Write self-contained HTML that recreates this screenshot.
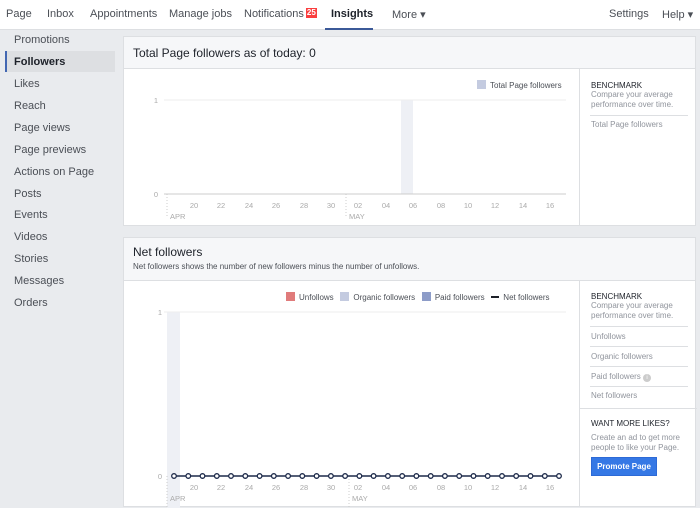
<!DOCTYPE html>
<html><head><meta charset="utf-8"><style>
*{margin:0;padding:0;box-sizing:border-box}
body{width:700px;height:501px;overflow:hidden;background:#e9ebee;font-family:"Liberation Sans",Arial,sans-serif;position:relative;color:#1d2129}
.nav{position:absolute;left:0;top:0;width:700px;height:30px;background:#fff;border-bottom:1px solid #dddfe2}
.nav span{position:absolute;top:8px;font-size:11px;color:#4b4f56;white-space:nowrap}
.nav span.badge{position:static;display:inline-block;background:#fa3e3e;color:#fff;font-size:8px;font-weight:bold;padding:0 1px;vertical-align:top;line-height:10px;margin-left:2px}
.side div{position:absolute;left:14px;font-size:11px;color:#4b4f56}
.card{position:absolute;left:123px;width:573px;background:#fff;border:1px solid #dddfe2}
.hd{background:#f6f7f9;border-bottom:1px solid #dddfe2}
.rp{position:absolute;left:455px;bottom:0;border-left:1px solid #dddfe2;width:117px}
.rp .t{font-size:8px;color:#1d2129;position:absolute;left:11px;white-space:nowrap}
.rp .d{font-size:8px;color:#90949c;position:absolute;left:11px;line-height:10px;white-space:nowrap}
.rp .l{position:absolute;left:10px;width:98px;border-top:1px solid #dddfe2}
svg text{font-family:"Liberation Sans",Arial,sans-serif;font-size:7.5px;fill:#aaa}
.lg{position:absolute;font-size:8px;color:#4b4f56;white-space:nowrap}
.sq{display:inline-block;width:9px;height:9px;vertical-align:-1px;margin-right:4px}
</style></head><body>
<div class="nav">
<span style="left:6px">Page</span><span style="left:47px">Inbox</span><span style="left:90px">Appointments</span><span style="left:169px">Manage jobs</span><span style="left:244px">Notifications<span class="badge">25</span></span>
<span style="left:331px;color:#1d2129;font-weight:bold">Insights</span><span style="left:392px">More ▾</span>
<span style="left:609px">Settings</span><span style="left:662px">Help ▾</span>
<div style="position:absolute;left:325px;top:28px;width:48px;height:2px;background:#3b5998"></div>
</div>
<div class="side">
<div style="top:34px">Promotions</div>
<div style="left:5px;top:51px;width:110px;height:21px;background:#dddfe2;border-left:2px solid #4267b2"></div>
<div style="top:56px;color:#1d2129;font-weight:bold">Followers</div>
<div style="top:78px">Likes</div><div style="top:100px">Reach</div><div style="top:122px">Page views</div>
<div style="top:144px">Page previews</div><div style="top:166px">Actions on Page</div><div style="top:188px">Posts</div>
<div style="top:209px">Events</div><div style="top:231px">Videos</div><div style="top:253px">Stories</div>
<div style="top:275px">Messages</div><div style="top:297px">Orders</div>
</div>

<div class="card" style="top:36px;height:190px">
<div class="hd" style="height:32px;padding:9px 9px;font-size:12px">Total Page followers as of today: 0</div>
<div class="lg" style="left:353px;top:43px"><span class="sq" style="background:#c4cbe0"></span>Total Page followers</div>
<svg style="position:absolute;left:0;top:0" width="455" height="190">
<rect x="277" y="63" width="12" height="94" fill="#eef0f5"/>
<line x1="40" y1="63" x2="442" y2="63" stroke="#eee"/>
<text x="34" y="66" text-anchor="end">1</text><text x="34" y="160" text-anchor="end">0</text>
<line x1="40" y1="157" x2="442" y2="157" stroke="#ccc"/>
<line x1="43" y1="157" x2="43" y2="179" stroke="#ccc" stroke-dasharray="1,2"/>
<line x1="222" y1="157" x2="222" y2="179" stroke="#ccc" stroke-dasharray="1,2"/>
<g text-anchor="middle">
<text x="70" y="171">20</text><text x="97" y="171">22</text><text x="125" y="171">24</text><text x="152" y="171">26</text><text x="180" y="171">28</text><text x="207" y="171">30</text><text x="234" y="171">02</text><text x="262" y="171">04</text><text x="289" y="171">06</text><text x="317" y="171">08</text><text x="344" y="171">10</text><text x="371" y="171">12</text><text x="399" y="171">14</text><text x="426" y="171">16</text>
</g>
<text x="46" y="182">APR</text><text x="225" y="182">MAY</text>
</svg>
<div class="rp" style="top:32px"><div class="t" style="top:12px">BENCHMARK</div><div class="d" style="top:21px">Compare your average<br>performance over time.</div><div class="l" style="top:46px"></div><div class="d" style="top:51px">Total Page followers</div></div>
</div>

<div class="card" style="top:237px;height:270px">
<div class="hd" style="height:43px;padding:7px 9px"><div style="font-size:12px">Net followers</div><div style="font-size:8px;color:#4b4f56;margin-top:3px">Net followers shows the number of new followers minus the number of unfollows.</div></div>
<div class="lg" style="left:162px;top:54px"><span class="sq" style="background:#e07b7b"></span>Unfollows&nbsp;&nbsp;&nbsp;<span class="sq" style="background:#c4cbe0"></span>Organic followers&nbsp;&nbsp;&nbsp;<span class="sq" style="background:#8d9cc8"></span>Paid followers&nbsp;&nbsp;&nbsp;<span style="display:inline-block;width:8px;height:2px;background:#1d2129;vertical-align:2px;margin-right:4px"></span>Net followers</div>
<svg style="position:absolute;left:0;top:0" width="455" height="270">
<rect x="43" y="74" width="13" height="196" fill="#eef0f5"/>
<line x1="40" y1="74" x2="442" y2="74" stroke="#eee"/>
<text x="38" y="77" text-anchor="end">1</text><text x="38" y="241" text-anchor="end">0</text>
<line x1="43" y1="238" x2="43" y2="270" stroke="#ccc" stroke-dasharray="1,2"/>
<line x1="225" y1="238" x2="225" y2="270" stroke="#ccc" stroke-dasharray="1,2"/>
<line x1="50" y1="238" x2="435" y2="238" stroke="#1d2a4a" stroke-width="1.5"/>
<g fill="#fff" stroke="#1d2a4a" stroke-width="1.3">
<circle cx="50" cy="238" r="2.3"/><circle cx="64.3" cy="238" r="2.3"/><circle cx="78.5" cy="238" r="2.3"/><circle cx="92.8" cy="238" r="2.3"/><circle cx="107" cy="238" r="2.3"/><circle cx="121.3" cy="238" r="2.3"/><circle cx="135.6" cy="238" r="2.3"/><circle cx="149.8" cy="238" r="2.3"/><circle cx="164.1" cy="238" r="2.3"/><circle cx="178.3" cy="238" r="2.3"/><circle cx="192.6" cy="238" r="2.3"/><circle cx="206.9" cy="238" r="2.3"/><circle cx="221.1" cy="238" r="2.3"/><circle cx="235.4" cy="238" r="2.3"/><circle cx="249.6" cy="238" r="2.3"/><circle cx="263.9" cy="238" r="2.3"/><circle cx="278.2" cy="238" r="2.3"/><circle cx="292.4" cy="238" r="2.3"/><circle cx="306.7" cy="238" r="2.3"/><circle cx="320.9" cy="238" r="2.3"/><circle cx="335.2" cy="238" r="2.3"/><circle cx="349.5" cy="238" r="2.3"/><circle cx="363.7" cy="238" r="2.3"/><circle cx="378" cy="238" r="2.3"/><circle cx="392.2" cy="238" r="2.3"/><circle cx="406.5" cy="238" r="2.3"/><circle cx="420.8" cy="238" r="2.3"/><circle cx="435" cy="238" r="2.3"/>
</g>
<g text-anchor="middle">
<text x="70" y="252">20</text><text x="97" y="252">22</text><text x="125" y="252">24</text><text x="152" y="252">26</text><text x="180" y="252">28</text><text x="207" y="252">30</text><text x="234" y="252">02</text><text x="262" y="252">04</text><text x="289" y="252">06</text><text x="317" y="252">08</text><text x="344" y="252">10</text><text x="371" y="252">12</text><text x="399" y="252">14</text><text x="426" y="252">16</text>
</g>
<text x="46" y="263">APR</text><text x="228" y="263">MAY</text>
</svg>
<div class="rp" style="top:43px"><div class="t" style="top:11px">BENCHMARK</div><div class="d" style="top:20px">Compare your average<br>performance over time.</div>
<div class="l" style="top:45px"></div><div class="d" style="top:51px">Unfollows</div>
<div class="l" style="top:65px"></div><div class="d" style="top:71px">Organic followers</div>
<div class="l" style="top:85px"></div><div class="d" style="top:91px">Paid followers <span style="display:inline-block;width:8px;height:8px;border-radius:50%;background:#ccc;color:#fff;font-size:6px;text-align:center;line-height:8px">i</span></div>
<div class="l" style="top:105px"></div><div class="d" style="top:110px">Net followers</div>
<div style="position:absolute;left:0;top:127px;width:117px;border-top:1px solid #dddfe2"></div>
<div class="t" style="top:138px">WANT MORE LIKES?</div>
<div class="d" style="top:152px">Create an ad to get more<br>people to like your Page.</div>
<div style="position:absolute;left:11px;top:176px;width:66px;height:19px;background:#3578e5;border:1px solid #2d6ad6;color:#fff;font-size:8px;font-weight:bold;text-align:center;line-height:17px">Promote Page</div>
</div>
</div>
</body></html>
